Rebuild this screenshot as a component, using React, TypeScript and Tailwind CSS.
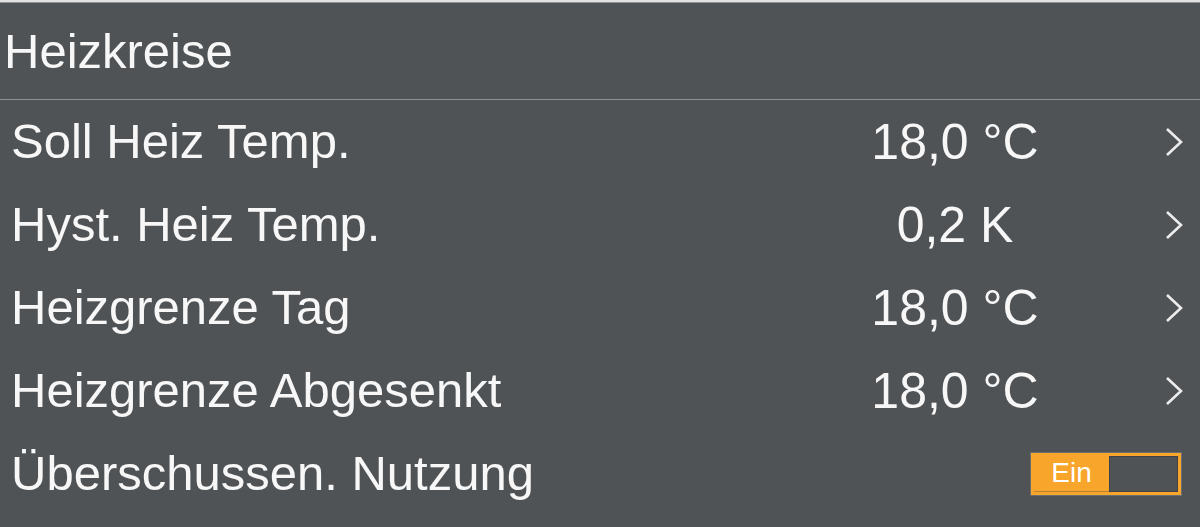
const rows = [
  { label: "Soll Heiz Temp.", value: "18,0 °C" },
  { label: "Hyst. Heiz Temp.", value: "0,2 K" },
  { label: "Heizgrenze Tag", value: "18,0 °C" },
  { label: "Heizgrenze Abgesenkt", value: "18,0 °C" },
];

const Chevron = (): JSX.Element => (
  <svg width="18" height="30" viewBox="0 0 18 30" fill="none">
    <path d="M2 2 L16 15 L2 28" stroke="#ececec" strokeWidth="2.6" />
  </svg>
);

export default function App(): JSX.Element {
  return (
    <div className="w-full h-[527px] bg-[#505356] text-[#f7f7f7] font-['Liberation_Sans',Arial,sans-serif] overflow-hidden">
      <div className="h-[3px] border-t-2 border-[#e2e2e2] bg-[#8f9294]" />
      <header className="h-[96px] flex items-center pl-[4px] text-[49px] leading-none">
        Heizkreise
      </header>
      <div className="h-px bg-[#8e9194]" />

      {rows.map((r) => (
        <div key={r.label} className="h-[83px] flex items-center pl-[11px] pr-[17px] text-[49px] leading-none">
          <div className="flex-1">{r.label}</div>
          <div className="w-[200px] text-center text-[50px]">{r.value}</div>
          <div className="w-[128px] flex justify-end">
            <Chevron />
          </div>
        </div>
      ))}

      <div className="h-[83px] flex items-center pl-[11px] pr-[18px] text-[49px] leading-none">
        <div className="flex-1">Überschussen. Nutzung</div>
        <div className="w-[152px] h-[44px] border border-[#6b6e70]">
          <div className="w-full h-full border-[3px] border-[#f8a52b] flex">
            <div className="w-[75px] bg-[#f8a52b] border-b border-[#b98236] flex items-center justify-center text-[28px] text-white leading-none">
              Ein
            </div>
            <div className="flex-1 border border-[#3f4346] bg-[#505356]" />
          </div>
        </div>
      </div>
    </div>
  );
}
